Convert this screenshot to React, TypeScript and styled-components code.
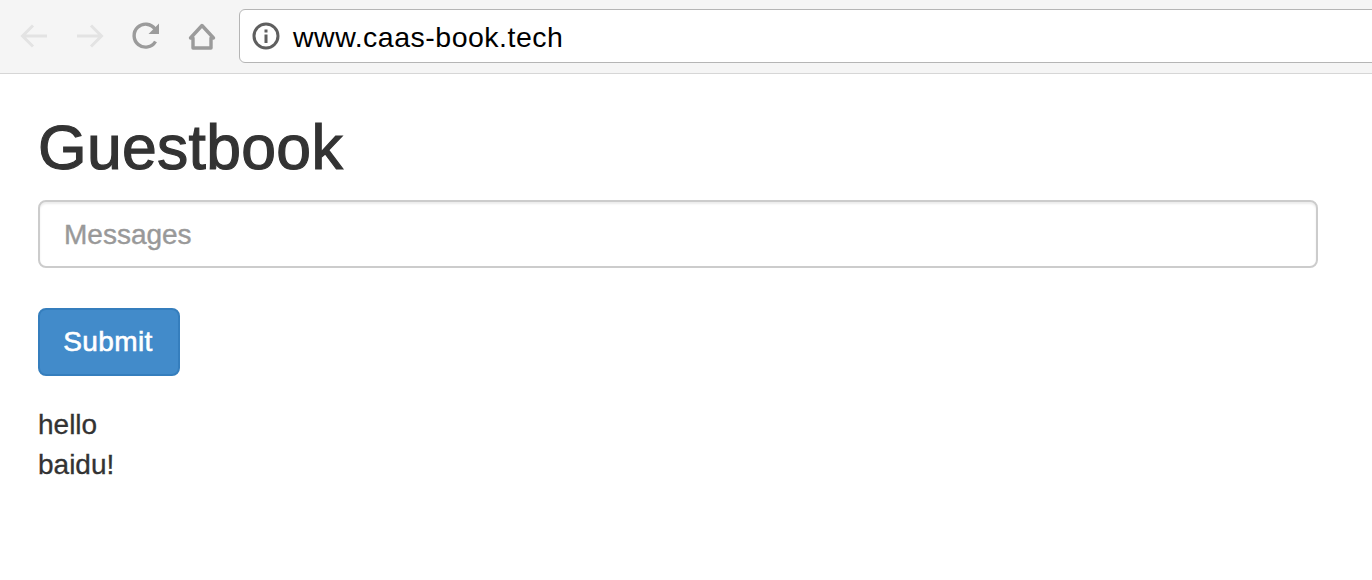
import React from "react";
import styled, { createGlobalStyle } from "styled-components";

const Global = createGlobalStyle`
  html, body { margin: 0; padding: 0; background: #fff; }
  body { font-family: "Liberation Sans", Arial, sans-serif; color: #333; }
`;
const Toolbar = styled.header`
  height: 74px; box-sizing: border-box; background: #f5f5f5; border-bottom: 1px solid #d6d6d6;
  display: flex; align-items: flex-start; padding: 9px 0 0 18px; overflow: hidden;
`;
const NavIcon = styled.svg`
  width: 32px; height: 32px; flex: none; margin: 12px 24px 0 0; display: block;
  &:nth-of-type(4) { margin-right: 21px; }
`;
const UrlBar = styled.div`
  flex: none; width: 1200px; height: 52px; border: 1px solid #b5b5b5; border-radius: 6px;
  background: #fff; display: flex; align-items: center; padding-left: 12px; gap: 13px;
`;
const UrlText = styled.span`
  font-size: 28.5px; letter-spacing: 0.5px; color: #000; padding-top: 2px;
`;
const Main = styled.main`
  padding: 38px 54px 0 38px;
`;
const Title = styled.h1`
  margin: 0 0 18px; font-size: 62.5px; line-height: 70px; font-weight: 400; color: #333;
  letter-spacing: 0.3px; -webkit-text-stroke: 1.2px #333;
`;
const MessageInput = styled.input`
  display: block; box-sizing: border-box; width: 100%; height: 68px; padding: 2px 24px 0;
  border: 2px solid #ccc; border-radius: 8px; background: #fff;
  box-shadow: inset 0 2px 2px rgba(0,0,0,.075);
  font: 28px "Liberation Sans", Arial, sans-serif; outline: none;
  -webkit-text-stroke: 0.4px #999;
  &::placeholder { color: #999; opacity: 1; }
`;
const SubmitButton = styled.button`
  display: block; box-sizing: border-box; width: 142px; height: 68px; margin-top: 40px;
  border: 2px solid #357ebd; border-radius: 8px; background: #428bca; color: #fff;
  font: 28px "Liberation Sans", Arial, sans-serif; letter-spacing: 0.4px; padding: 0 2px 0 0;
  -webkit-text-stroke: 0.6px #fff;
`;
const Messages = styled.ul`
  list-style: none; margin: 29px 0 0; padding: 0; font-size: 28px; line-height: 40px; color: #333;
  -webkit-text-stroke: 0.3px #333;
`;

export default function App() {
  return (
    <>
      <Global />
      <Toolbar>
        <NavIcon viewBox="0 0 32 32" fill="none" stroke="#e3e3e3" strokeWidth="3">
          <path d="M29 15H5M15 4.5 4.5 15 15 25.5" />
        </NavIcon>
        <NavIcon viewBox="0 0 32 32" fill="none" stroke="#e3e3e3" strokeWidth="3">
          <path d="M3 15h24M17 4.5 27.5 15 17 25.5" />
        </NavIcon>
        <NavIcon viewBox="0 0 32 32" fill="none">
          <path d="M25.5 20.5A11.5 11.5 0 1 1 25 8" stroke="#9b9b9b" strokeWidth="3.4" />
          <path d="M29 2.5V13H18.5Z" fill="#9b9b9b" />
        </NavIcon>
        <NavIcon viewBox="0 0 32 32" fill="none" stroke="#9b9b9b" strokeWidth="3.4">
          <path d="M4.5 17 16 4.5 27.5 17H25v10H7V17Z" strokeLinejoin="round" />
        </NavIcon>
        <UrlBar>
          <svg width="28" height="28" viewBox="0 0 28 28" fill="none">
            <circle cx="14" cy="14" r="12" stroke="#5f5f5f" strokeWidth="3" />
            <path d="M12.5 7.5h3v3h-3zM12.5 12.5h3v8.5h-3z" fill="#5f5f5f" />
          </svg>
          <UrlText>www.caas-book.tech</UrlText>
        </UrlBar>
      </Toolbar>
      <Main>
        <Title>Guestbook</Title>
        <MessageInput placeholder="Messages" readOnly />
        <SubmitButton>Submit</SubmitButton>
        <Messages>
          <li>hello</li>
          <li>baidu!</li>
        </Messages>
      </Main>
    </>
  );
}
